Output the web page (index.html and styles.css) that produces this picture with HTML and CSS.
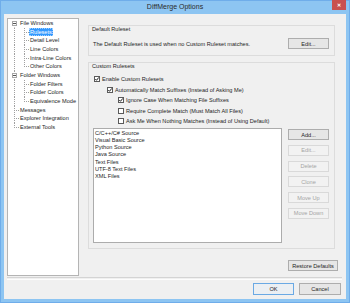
FILE: index.html
```html
<!doctype html>
<html lang="en">
<head>
  <title>DiffMerge Options</title>
  <meta charset="utf-8">
  <link rel="stylesheet" href="styles.css">
</head>
<body>
<div class="window">
  <div class="titleBar">
    <span class="titleSpacer"></span>
    <span class="titleText">DiffMerge Options</span>
    <span class="closeButton">&#x2715;</span>
  </div>

  <div class="client">
    <div class="main">
      <!-- option pages -->
      <div class="tree">
        <div class="treeRow"><span class="gutter expander first"><span class="expBox"></span></span><span class="treeLabel">File Windows</span></div>
        <div class="treeRow"><span class="gutter pipe"></span><span class="gutter tee"></span><span class="treeLabel treeSelected">Rulesets</span></div>
        <div class="treeRow"><span class="gutter pipe"></span><span class="gutter tee"></span><span class="treeLabel">Detail Level</span></div>
        <div class="treeRow"><span class="gutter pipe"></span><span class="gutter tee"></span><span class="treeLabel">Line Colors</span></div>
        <div class="treeRow"><span class="gutter pipe"></span><span class="gutter tee"></span><span class="treeLabel">Intra-Line Colors</span></div>
        <div class="treeRow"><span class="gutter pipe"></span><span class="gutter ell"></span><span class="treeLabel">Other Colors</span></div>
        <div class="treeRow"><span class="gutter expander"><span class="expBox"></span></span><span class="treeLabel">Folder Windows</span></div>
        <div class="treeRow"><span class="gutter pipe"></span><span class="gutter tee"></span><span class="treeLabel">Folder Filters</span></div>
        <div class="treeRow"><span class="gutter pipe"></span><span class="gutter tee"></span><span class="treeLabel">Folder Colors</span></div>
        <div class="treeRow"><span class="gutter pipe"></span><span class="gutter ell"></span><span class="treeLabel">Equivalence Mode</span></div>
        <div class="treeRow"><span class="gutter tee"></span><span class="treeLabel">Messages</span></div>
        <div class="treeRow"><span class="gutter tee"></span><span class="treeLabel">Explorer Integration</span></div>
        <div class="treeRow"><span class="gutter ell"></span><span class="treeLabel">External Tools</span></div>
      </div>

      <div class="pane">
        <div class="groupBox defaultGroup">
          <div class="groupLabel">Default Ruleset</div>
          <div class="defaultRow">
            <span>The Default Ruleset is used when no Custom Ruleset matches.</span>
            <button class="btn">Edit...</button>
          </div>
        </div>

        <div class="groupBox customGroup">
          <div class="groupLabel">Custom Rulesets</div>
          <div class="checkRow level0"><span class="checkBox checked"></span>Enable Custom Rulesets</div>
          <div class="checkRow level1"><span class="checkBox checked"></span>Automatically Match Suffixes (Instead of Asking Me)</div>
          <div class="checkRow level2"><span class="checkBox checked"></span>Ignore Case When Matching File Suffixes</div>
          <div class="checkRow level2"><span class="checkBox"></span>Require Complete Match (Must Match All Files)</div>
          <div class="checkRow level2"><span class="checkBox"></span>Ask Me When Nothing Matches (Instead of Using Default)</div>

          <div class="rulesetArea">
            <div class="rulesetList">
              <div>C/C++/C# Source</div>
              <div>Visual Basic Source</div>
              <div>Python Source</div>
              <div>Java Source</div>
              <div>Text Files</div>
              <div>UTF-8 Text Files</div>
              <div>XML Files</div>
            </div>
            <div class="rulesetButtons">
              <button class="btn">Add...</button>
              <button class="btn" disabled>Edit...</button>
              <button class="btn" disabled>Delete</button>
              <button class="btn" disabled>Clone</button>
              <button class="btn" disabled>Move Up</button>
              <button class="btn" disabled>Move Down</button>
            </div>
          </div>
        </div>

        <button class="btn restoreButton">Restore Defaults</button>
      </div>
    </div>

    <div class="separator"></div>

    <div class="footer">
      <button class="btn footerButton defaultButton">OK</button>
      <button class="btn footerButton cancelButton">Cancel</button>
      <span class="grip"></span>
    </div>
  </div>
</div>
</body>
</html>
```

FILE: styles.css
```css
html, body {
  margin: 0;
  padding: 0;
}

body {
  width: 350px;
  height: 303px;
  overflow: hidden;
  font-family: "Liberation Sans", Arial, sans-serif;
  font-size: 5.6px;
  color: #1e1e1e;
}

.window {
  width: 350px;
  height: 303px;
  box-sizing: border-box;
  background-color: #8dc5f2;
  border: 1px solid #6fadea;
  display: flex;
  flex-direction: column;
}

/* title bar */

.titleBar {
  height: 13px;
  display: flex;
  align-items: flex-start;
  justify-content: space-between;
}

.titleSpacer {
  width: 17px;
}

.titleText {
  font-family: "Liberation Sans", Arial, sans-serif;
  font-size: 7px;
  line-height: 12px;
  color: #2b2b2b;
}

.closeButton {
  width: 14px;
  height: 10px;
  margin-right: 3px;
  margin-top: -1px;
  background-color: #c9504f;
  color: #fff;
  font-size: 5px;
  font-weight: bold;
  line-height: 10px;
  text-align: center;
}

/* client area */

.client {
  margin: 0 3px 3px 3px;
  flex: 1;
  background-color: #f0f0f0;
  padding: 4px 0 0 3px;
  display: flex;
  flex-direction: column;
}

.main {
  display: flex;
  height: 258px;
}

.tree {
  width: 72px;
  height: 258px;
  box-sizing: border-box;
  background-color: #fff;
  border: 1px solid #b4b4b4;
  padding: 0 0 0 1px;
}

.treeRow {
  display: flex;
  height: 8.67px;
  line-height: 8.67px;
  white-space: nowrap;
}

.gutter {
  width: 10px;
  flex: none;
  background-repeat: no-repeat;
}

.pipe {
  background-image: repeating-linear-gradient(to bottom, #a0a0a0 0 1px, transparent 1px 2px);
  background-size: 1px 100%;
  background-position: 5px 0;
}

.tee {
  background-image:
    repeating-linear-gradient(to bottom, #a0a0a0 0 1px, transparent 1px 2px),
    repeating-linear-gradient(to right, #a0a0a0 0 1px, transparent 1px 2px);
  background-size: 1px 100%, 5px 1px;
  background-position: 5px 0, 5px 4px;
}

.ell {
  background-image:
    repeating-linear-gradient(to bottom, #a0a0a0 0 1px, transparent 1px 2px),
    repeating-linear-gradient(to right, #a0a0a0 0 1px, transparent 1px 2px);
  background-size: 1px 4px, 5px 1px;
  background-position: 5px 0, 5px 4px;
}

.expander {
  display: flex;
  align-items: center;
  justify-content: center;
  background-image: repeating-linear-gradient(to bottom, #a0a0a0 0 1px, transparent 1px 2px);
  background-size: 1px 100%;
  background-position: 5px 0;
}

.expander.first {
  background-size: 1px 50%;
  background-position: 5px 100%;
}

.expBox {
  width: 5px;
  height: 5px;
  box-sizing: border-box;
  border: 1px solid #a6a6a6;
  background: linear-gradient(#555, #555) center / 3px 1px no-repeat, #fff;
  margin-left: 1px;
}

.treeLabel {
  padding: 0 1px;
}

.treeSelected {
  background-color: #3399ff;
  color: #fff;
  outline: 1px dotted #9fd0ff;
  outline-offset: -1px;
}

/* right pane */

.pane {
  width: 250px;
  margin-left: 9px;
  padding-top: 7px;
  display: flex;
  flex-direction: column;
}

.groupBox {
  width: 247px;
  box-sizing: border-box;
  border: 1px solid #dcdcdc;
  padding: 0 5px 0 3px;
}

.groupLabel {
  line-height: 7px;
}

.defaultGroup {
  height: 31px;
}

.defaultRow {
  margin-top: 5px;
  padding-left: 1px;
  display: flex;
  align-items: center;
  justify-content: space-between;
}

.customGroup {
  margin-top: 6px;
  height: 187px;
  padding-top: 0;
}

.checkRow {
  height: 10.5px;
  display: flex;
  align-items: center;
  white-space: nowrap;
}

.checkRow:first-of-type {
  margin-top: 4px;
}

.groupLabel + .checkRow {
  margin-top: 4px;
}

.level0 {
  padding-left: 2px;
}

.level1 {
  padding-left: 15px;
}

.level2 {
  padding-left: 26px;
}

.checkBox {
  width: 6px;
  height: 6px;
  box-sizing: border-box;
  border: 1px solid #5a5a5a;
  background-color: #fff;
  margin-right: 2px;
  flex: none;
}

.checkBox.checked {
  background: url("data:image/svg+xml;utf8,<svg xmlns='http://www.w3.org/2000/svg' width='4' height='4' viewBox='0 0 4 4'><path d='M0.3 2 L1.5 3.3 L3.8 0.4' fill='none' stroke='%23202020' stroke-width='1'/></svg>") center / 4px 4px no-repeat, #fff;
}

.rulesetArea {
  display: flex;
  margin-top: 1.5px;
  padding-left: 1px;
}

.rulesetList {
  width: 189px;
  height: 115px;
  box-sizing: border-box;
  background-color: #fff;
  border: 1px solid #acacac;
  padding: 0.5px 1px;
  line-height: 7.3px;
}

.rulesetButtons {
  margin-left: 6px;
  padding-top: 1px;
  display: flex;
  flex-direction: column;
  gap: 4.8px;
}

/* buttons */

.btn {
  width: 41px;
  height: 11px;
  box-sizing: border-box;
  margin: 0;
  padding: 0;
  font-family: inherit;
  font-size: 5.6px;
  color: #1e1e1e;
  background-color: #e6e6e6;
  border: 1px solid #adadad;
  border-radius: 0;
}

.btn:disabled {
  color: #a4a4a4;
  background-color: #f2f2f2;
  border-color: #d9d9d9;
}

.restoreButton {
  width: 50px;
  margin-top: 11px;
  align-self: flex-end;
}

.separator {
  margin: 1px 4px 0 0;
  height: 1px;
  border-top: 1px solid #d4d4d4;
  border-bottom: 1px solid #fdfdfd;
}

.footer {
  display: flex;
  justify-content: flex-end;
  align-items: flex-start;
  margin-top: 3px;
}

.footerButton {
  height: 12px;
}

.defaultButton {
  border-color: #6aa9e4;
  background-color: #ebeff3;
}

.cancelButton {
  width: 42px;
  margin-left: 5px;
}

.grip {
  width: 4px;
  height: 4px;
  margin: 9px 0 0 1px;
  background: radial-gradient(circle, #b8b8b8 0 0.6px, transparent 0.7px) 0 0 / 2px 2px;
  clip-path: polygon(100% 0, 100% 100%, 0 100%);
}
```
